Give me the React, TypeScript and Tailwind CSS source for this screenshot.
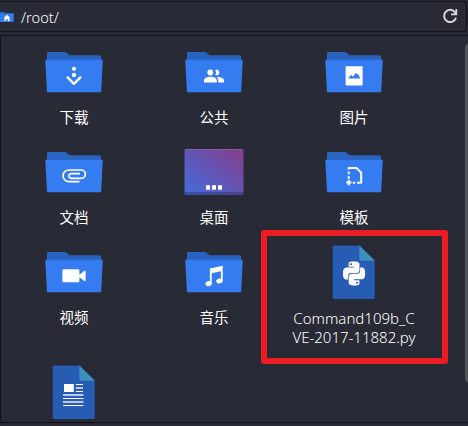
import type { ReactNode } from "react";
import { SiPython } from "react-icons/si";

function Folder({ children }: { children?: ReactNode }) {
  return (
    <svg viewBox="0 0 60 60" className="h-[60px] w-[60px]">
      <path d="M3 18V9.2Q3 8 4.3 8H20.8Q22 8 22.8 8.8L25.3 11.2H55.5Q57 11.2 57 12.7V18Z" fill="#2a63c0" />
      <path d="M2 15.7H58Q58.8 15.7 58.7 16.7L57.2 47.2Q57.1 48.3 56 48.3H4.1Q3 48.3 2.9 47.2L1.3 16.7Q1.2 15.7 2 15.7Z" fill="#357cf0" />
      {children}
    </svg>
  );
}

function Sheet({ children }: { children?: ReactNode }) {
  return (
    <svg viewBox="0 0 60 60" className="h-[60px] w-[60px]">
      <path d="M10.2 1.5H35.5L50.7 16.5V53.5Q50.7 55 49.2 55H10.2Q8.7 55 8.7 53.5V3Q8.7 1.5 10.2 1.5Z" fill="#265cb3" />
      <path d="M35.3 1.6L50.7 16.8H37Q35.3 16.8 35.3 15.1Z" fill="#3d8fbd" />
      {children}
    </svg>
  );
}

const Download = () => (
  <Folder>
    <circle cx="30" cy="24.8" r="2.1" fill="#fff" />
    <circle cx="30" cy="31" r="2.2" fill="#fff" />
    <path d="M23.6 33.4L30 39.8L36.4 33.4" fill="none" stroke="#fff" strokeWidth="2.4" strokeLinecap="round" strokeLinejoin="round" />
  </Folder>
);

const Public = () => (
  <Folder>
    <g fill="#fff">
      <circle cx="26.3" cy="28.5" r="2.9" />
      <path d="M31.2 25.9A2.9 2.9 0 1 1 31.2 31.1A4.6 4.6 0 0 0 31.2 25.9Z" />
      <path d="M20 38.4V36.3C20 33.8 23.8 32.8 26.4 32.8S32.8 33.8 32.8 36.3V38.4Z" />
      <path d="M34.3 38.4V36.3C34.3 34.8 33.5 33.7 32.4 33C35.6 32.7 40 33.6 40 36.3V38.4Z" />
    </g>
  </Folder>
);

const Pictures = () => (
  <Folder>
    <rect x="21.6" y="22.2" width="17" height="19.3" rx="0.8" fill="#fff" />
    <path d="M24.2 34.5L27.2 30.8L29 32.8L32 28.7L33.3 30.8L34.2 30.1L36.2 34.5Z" fill="#357cf0" />
  </Folder>
);

const Documents = () => (
  <Folder>
    <path d="M35.5 37.7H25A6 5.85 0 0 1 25 26H37.2A4.1 4.15 0 0 1 37.2 34.3H27.3A2.3 2.3 0 0 1 27.3 29.7H36" fill="none" stroke="#fff" strokeWidth="1.7" />
  </Folder>
);

const Desktop = () => (
  <svg viewBox="0 0 60 60" className="h-[60px] w-[60px]">
    <defs>
      <linearGradient id="desk" x1="0" y1="1" x2="1" y2="0">
        <stop offset="0" stopColor="#466ddd" />
        <stop offset="0.5" stopColor="#6254b4" />
        <stop offset="1" stopColor="#893c8c" />
      </linearGradient>
    </defs>
    <rect x="0.5" y="5" width="59" height="46" rx="1.5" fill="url(#desk)" />
    <path d="M1.5 5.5H58.5" stroke="#fff" strokeOpacity=".12" />
    <path d="M0.5 48H59.5V49.5Q59.5 51 58 51H2Q0.5 51 0.5 49.5Z" fill="#242a60" fillOpacity=".4" />
    <path d="M22 41.3h4v4.5h-4zM28 41.3h4v4.5h-4zM34 41.3h4v4.5h-4z" fill="#fff" />
  </svg>
);

const Templates = () => (
  <Folder>
    <path d="M24.7 25.5V24H32.5L37.2 28.7V38.5H35.6M24.7 27.5V30.3M24.7 32.3V34.7M28.8 38.7H31.2M33 38.7H35.7" fill="none" stroke="#fff" strokeWidth="2" />
    <path d="M22.2 38.4H27.5M24.8 35.7V41.2" stroke="#fff" strokeWidth="2" />
  </Folder>
);

const Videos = () => (
  <Folder>
    <rect x="18.4" y="25.2" width="17" height="13" rx="1.2" fill="#fff" />
    <path d="M35 31L40.4 26.7Q41.6 26 41.6 27.4V36.4Q41.6 37.8 40.4 37L35 33Z" fill="#fff" />
  </Folder>
);

const Music = () => (
  <Folder>
    <path d="M25.9 24.5L38.7 21.8V37H36.9V27.2L27.7 29.2V39.5H25.9Z" fill="#fff" />
    <ellipse cx="24.6" cy="39.6" rx="3.2" ry="2.4" transform="rotate(-15 24.6 39.6)" fill="#fff" />
    <ellipse cx="35.4" cy="37" rx="3.2" ry="2.4" transform="rotate(-15 35.4 37)" fill="#fff" />
  </Folder>
);

const PythonFile = () => (
  <Sheet>
    <g transform="translate(18.9 17.2) scale(.93 1.02)">
      <SiPython size={24} color="#fff" />
    </g>
  </Sheet>
);

const TextFile = () => (
  <Sheet>
    <rect x="20" y="20" width="9.8" height="8" fill="#fff" />
    <path d="M31.8 20.5H39M31.8 27.5H39M19 34.5H39.5M19 41.5H39.5" stroke="#fff" />
    <path d="M31.8 24H39M19 31H39.5M19 38H39.5" stroke="#b9cae8" strokeWidth="2" />
  </Sheet>
);

type ItemProps = { icon: ReactNode; label?: string; file?: boolean; tall?: boolean };

function Item({ icon, label, file, tall }: ItemProps) {
  return (
    <div className={`flex flex-col items-center ${tall ? "h-[120px]" : "h-[100px]"}`}>
      {icon}
      <span
        className={`break-all text-center ${
          file
            ? "mt-[5px] w-[126px] text-[15px] font-light leading-[19px]"
            : "mt-[3px] w-[123px] text-[14.5px] font-normal leading-5"
        }`}
      >
        {label}
      </span>
    </div>
  );
}

export default function App() {
  return (
    <main className="relative flex h-[426px] w-[468px] flex-col overflow-hidden bg-[#272a34] pt-px font-['Noto_Sans','Noto_Sans_CJK_SC',sans-serif] text-white">
      <header className="mr-px flex h-[31px] items-center rounded-r-[4px] border-y border-r border-[#111319] bg-[#282a35] pr-[9px]">
        <svg viewBox="0 0 14 12" className="h-3 w-[14px]">
          <path d="M0 1H4L5.5 2H13V5H0Z" fill="#2a63c0" />
          <path d="M0 2.7H14L13.5 11H0Z" fill="#357cf0" />
          <path d="M3.8 6.7L7 3.7L10.2 6.7H9.5V10H7.8V8H6.2V10H4.5V6.7Z" fill="#fff" />
        </svg>
        <span className="ml-[7px] text-[14.67px] font-light leading-5">/root/</span>
        <svg viewBox="0 0 16 16" className="-mr-px mb-px ml-auto h-4 w-4" fill="none">
          <path d="M12.9 4.1A6.1 6.1 0 1 0 14 9.7" stroke="#d7d7d7" strokeWidth="2" />
          <path d="M15.2 1V7.2H9V5.5H11.5L13.5 3V1Z" fill="#d7d7d7" />
        </svg>
      </header>
      <section className="mt-[3px] flex h-[388px] overflow-hidden border-y border-l border-[#111319] bg-[#282a35] pl-[3px]">
        <div className="mt-2 grid w-[420px] shrink-0 grid-cols-3 content-start">
          <Item icon={<Download />} label="下载" />
          <Item icon={<Public />} label="公共" />
          <Item icon={<Pictures />} label="图片" />
          <Item icon={<Documents />} label="文档" />
          <Item icon={<Desktop />} label="桌面" />
          <Item icon={<Templates />} label="模板" />
          <Item icon={<Videos />} label="视频" tall />
          <Item icon={<Music />} label="音乐" tall />
          <Item icon={<PythonFile />} label="Command109b_CVE-2017-11882.py" file tall />
          <Item icon={<TextFile />} />
        </div>
        <div className="ml-auto mt-2 h-[338px] w-[3px] rounded-l-sm bg-[#505358]" />
      </section>
      <div className="absolute left-[261px] top-[230px] h-[134px] w-[187px] rounded-[3px] border-6 border-[#ed1c24]" />
    </main>
  );
}
